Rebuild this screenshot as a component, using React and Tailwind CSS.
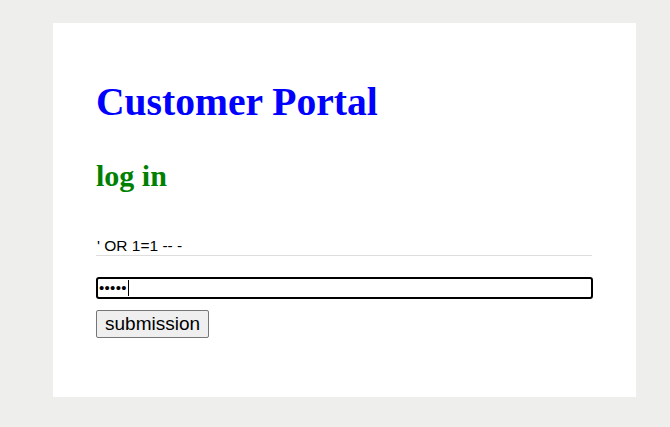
import React from "react";

export default function App() {
	return (
		<div className="min-h-screen bg-[#eeeeec] pt-[23px] pl-[53px]">
			<div className="w-[583px] h-[374px] bg-white px-[43px] pt-[56px]">
				<h1 className="text-[39.6px] leading-[46px] font-bold text-[#0000ff] font-['Liberation_Serif',serif]">Customer Portal</h1>
				<h2 className="mt-[34px] text-[30px] leading-[34px] font-bold text-[#008000] font-['Liberation_Serif',serif]">log in</h2>
				<div className="mt-[44px] w-[496px] pl-[1px] pb-[1px] border-b border-[#dddddd] text-[15.5px] leading-[17px] text-black font-['Liberation_Sans',Arial,sans-serif]">
					' OR 1=1 -- -
				</div>
				<div className="mt-[21px] h-[22px] w-[497px] border-2 border-black rounded-[3px] flex items-center pl-[1px] font-['Liberation_Sans',Arial,sans-serif]">
					<span className="text-[15px] leading-[16px] tracking-[0.3px]">•••••</span>
					<span className="ml-[1px] w-[1px] h-[16px] bg-black" />
				</div>
				<button className="mt-[11px] h-[28px] px-[8px] bg-[#efefef] border border-[#767676] rounded-[2px] text-[19px] leading-[22px] text-black font-['Liberation_Sans',Arial,sans-serif]">
					submission
				</button>
			</div>
		</div>
	);
}
